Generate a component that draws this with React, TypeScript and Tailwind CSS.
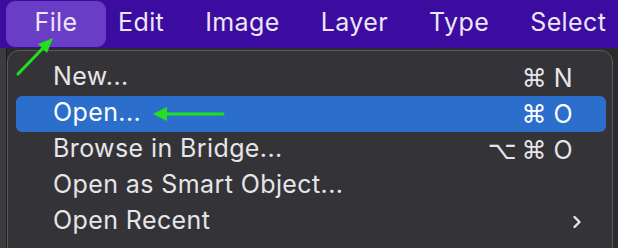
const items = [
  { label: "New...", keys: ["⌘", "N"] },
  { label: "Open...", keys: ["⌘", "O"], active: true },
  { label: "Browse in Bridge...", keys: ["⌥", "⌘", "O"] },
  { label: "Open as Smart Object...", keys: [] as string[] },
  { label: "Open Recent", keys: [] as string[], sub: true },
];

function Keys({ keys }: { keys: string[] }) {
  return (
    <span className="flex items-center gap-[5px] pr-[33px]">
      {keys.map((k, i) =>
        k === "⌘" || k === "⌥" ? (
          <span key={i} className="font-['DejaVu_Sans',sans-serif] text-[25px] leading-none tracking-normal">{k}</span>
        ) : (
          <span key={i} className="ml-[2px] leading-none">{k}</span>
        ),
      )}
    </span>
  );
}

export default function App() {
  return (
    <div className="relative h-[248px] w-[618px] overflow-hidden bg-[#2b2b2d] font-['Inter',sans-serif] text-[25px] tracking-[0.4px] text-[#e6e5e9]">
      <header className="flex h-[48px] items-center bg-[#3b0c9f] text-[#ece6f8]">
        <div className="ml-[6px] flex h-[46px] w-[100px] items-center justify-center rounded-[9px] bg-[#6a3dc6] pb-[2px]">File</div>
        <nav className="ml-[12px] flex gap-[41px] pb-[2px]">
          <span>Edit</span>
          <span>Image</span>
          <span>Layer</span>
          <span>Type</span>
          <span>Select</span>
        </nav>
      </header>
      <div className="flex">
        <div className="h-[200px] w-[7px] border-r border-[#1d1d1f] bg-[#3c3c3e]" />
        <div className="mt-[2px] h-[210px] w-[606px] rounded-t-[12px] border border-[#5b5a5e] bg-[#343337] pt-[9px] pl-[8px] pr-[6px]">
          {items.map((it) => (
            <div
              key={it.label}
              className={`flex h-[36px] items-center justify-between rounded-[6px] pl-[37px] ${it.active ? "bg-[#2b6ecb] text-white" : ""}`}
            >
              <span className="pb-[2px]">{it.label}</span>
              {it.sub ? (
                <svg width="10" height="14" viewBox="0 0 10 14" className="mr-[24px]">
                  <path d="M2.5 2 L7.5 7 L2.5 12" fill="none" stroke="#e6e5e9" strokeWidth="2.4" strokeLinecap="round" strokeLinejoin="round" />
                </svg>
              ) : (
                <Keys keys={it.keys} />
              )}
            </div>
          ))}
        </div>
      </div>
      <svg className="pointer-events-none absolute left-0 top-0" width="618" height="248">
        <g stroke="#22e01c" strokeWidth="3" fill="#22e01c" strokeLinecap="round">
          <line x1="18" y1="74" x2="45" y2="46" />
          <polygon points="53,38 38,44 47,53" stroke="none" />
          <line x1="223" y1="114" x2="165" y2="114" />
          <polygon points="153,114 167,107 167,121" stroke="none" />
        </g>
      </svg>
    </div>
  );
}
